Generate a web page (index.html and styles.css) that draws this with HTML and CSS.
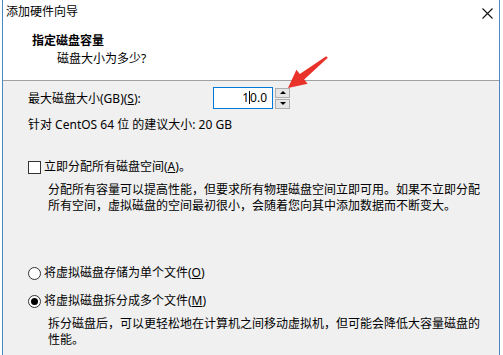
FILE: index.html
```html
<!DOCTYPE html>
<html lang="zh-CN">
<head>
    <meta charset="UTF-8">
    <title>添加硬件向导</title>
    <link rel="stylesheet" href="styles.css">
</head>
<body>

    <div class="window">
        <div class="titlebar">
            <span class="title">添加硬件向导</span>
            <svg class="close" width="11" height="11" viewBox="0 0 11 11">
                <path d="M0.5 0.5 L10.5 10.5 M10.5 0.5 L0.5 10.5" stroke="#111" stroke-width="1.1" fill="none"/>
            </svg>
        </div>

        <div class="header">
            <div class="header-title">指定磁盘容量</div>
            <div class="header-sub">磁盘大小为多少?</div>
        </div>

        <div class="content">
            <div class="size-row">
                <label class="size-label">最大磁盘大小(GB)(<u>S</u>):</label>
                <div class="spin-input">1<span class="caret"></span>0.0</div>
                <div class="spin-btns">
                    <span class="spin-btn"><span class="tri-up"></span></span>
                    <span class="spin-btn"><span class="tri-down"></span></span>
                </div>
            </div>

            <div class="hint">针对 CentOS 64 位 的建议大小: 20 GB</div>

            <div class="check-row">
                <span class="checkbox"></span>
                <span>立即分配所有磁盘空间(<u>A</u>)。</span>
            </div>
            <p class="desc">分配所有容量可以提高性能，但要求所有物理磁盘空间立即可用。如果不立即分配<br>所有空间，虚拟磁盘的空间最初很小，会随着您向其中添加数据而不断变大。</p>

            <div class="radio-row first">
                <span class="radio"></span>
                <span>将虚拟磁盘存储为单个文件(<u>O</u>)</span>
            </div>
            <div class="radio-row">
                <span class="radio checked"></span>
                <span>将虚拟磁盘拆分成多个文件(<u>M</u>)</span>
            </div>
            <p class="desc">拆分磁盘后，可以更轻松地在计算机之间移动虚拟机，但可能会降低大容量磁盘的<br>性能。</p>
        </div>

        <!-- flecha roja encima del campo -->
        <svg class="arrow" width="60" height="45" viewBox="0 0 60 45">
            <polygon points="8,38 27.6,33.8 24.2,29.5 47.8,7.8 46.2,6.2 19.8,24.1 16.4,19.8" fill="#e8322a"/>
        </svg>
    </div>

</body>
</html>
```

FILE: styles.css
```css
body {
    margin: 0;
    background-color: #ffffff;
    font-family: "Noto Sans", "Noto Sans CJK SC", sans-serif;
    font-size: 12px;
    color: #000;
}

.window {
    position: relative;
    margin-left: 2px;
    width: 496px;
    height: 355px;
    border-left: 1px solid #4a8ac4;
    border-right: 1px solid #4a8ac4;
    background-color: #f0f0f0;
    overflow: hidden;
}

.titlebar {
    display: flex;
    justify-content: space-between;
    align-items: center;
    height: 24px;
    background: white;
    padding: 0 6px 0 3px;
}

.title {
    line-height: 16px;
}

.close {
    margin-top: 2px;
}

.header {
    height: 57px;
    background: white;
    border-bottom: 1px solid #a0a0a0;
    box-sizing: border-box;
    padding-top: 9px;
}

.header-title {
    font-weight: bold;
    line-height: 16px;
    padding-left: 29px;
}

.header-sub {
    line-height: 16px;
    margin-top: 2px;
    padding-left: 54px;
}

.content {
    padding-left: 25px;
}

.size-row {
    display: flex;
    align-items: center;
    margin-top: 6px;
    height: 22px;
}

.size-label {
    width: 185px;
}

.spin-input {
    width: 60px;
    height: 22px;
    box-sizing: border-box;
    border: 1px solid #0078d7;
    background: white;
    text-align: right;
    padding-right: 5px;
    line-height: 20px;
}

.caret {
    display: inline-block;
    width: 1px;
    height: 13px;
    background: #000;
    vertical-align: -2px;
}

.spin-btns {
    display: flex;
    flex-direction: column;
    gap: 1px;
    margin-left: 2px;
}

.spin-btn {
    display: flex;
    align-items: center;
    justify-content: center;
    width: 15px;
    height: 10px;
    box-sizing: border-box;
    border: 1px solid #adadad;
    background: #e5e5e5;
}

.tri-up {
    width: 0;
    height: 0;
    border-left: 3px solid transparent;
    border-right: 3px solid transparent;
    border-bottom: 3px solid #000;
}

.tri-down {
    width: 0;
    height: 0;
    border-left: 3px solid transparent;
    border-right: 3px solid transparent;
    border-top: 3px solid #000;
}

.hint {
    margin-top: 8px;
    line-height: 16px;
}

.check-row,
.radio-row {
    display: flex;
    align-items: center;
    gap: 3px;
    line-height: 16px;
}

.check-row {
    margin-top: 26px;
}

.checkbox {
    width: 13px;
    height: 13px;
    box-sizing: border-box;
    border: 1px solid #333;
    background: white;
}

.desc {
    margin: 7px 0 0 20px;
    line-height: 16px;
}

.radio-row {
    margin-top: 12px;
}

.radio-row.first {
    margin-top: 51px;
}

.radio {
    width: 13px;
    height: 13px;
    box-sizing: border-box;
    border: 1px solid #333;
    border-radius: 50%;
    background: white;
    position: relative;
}

.radio.checked::after {
    content: "";
    position: absolute;
    left: 2px;
    top: 2px;
    width: 7px;
    height: 7px;
    border-radius: 50%;
    background: #000;
}

.arrow {
    position: absolute;
    left: 277px;
    top: 50px;
}
```
